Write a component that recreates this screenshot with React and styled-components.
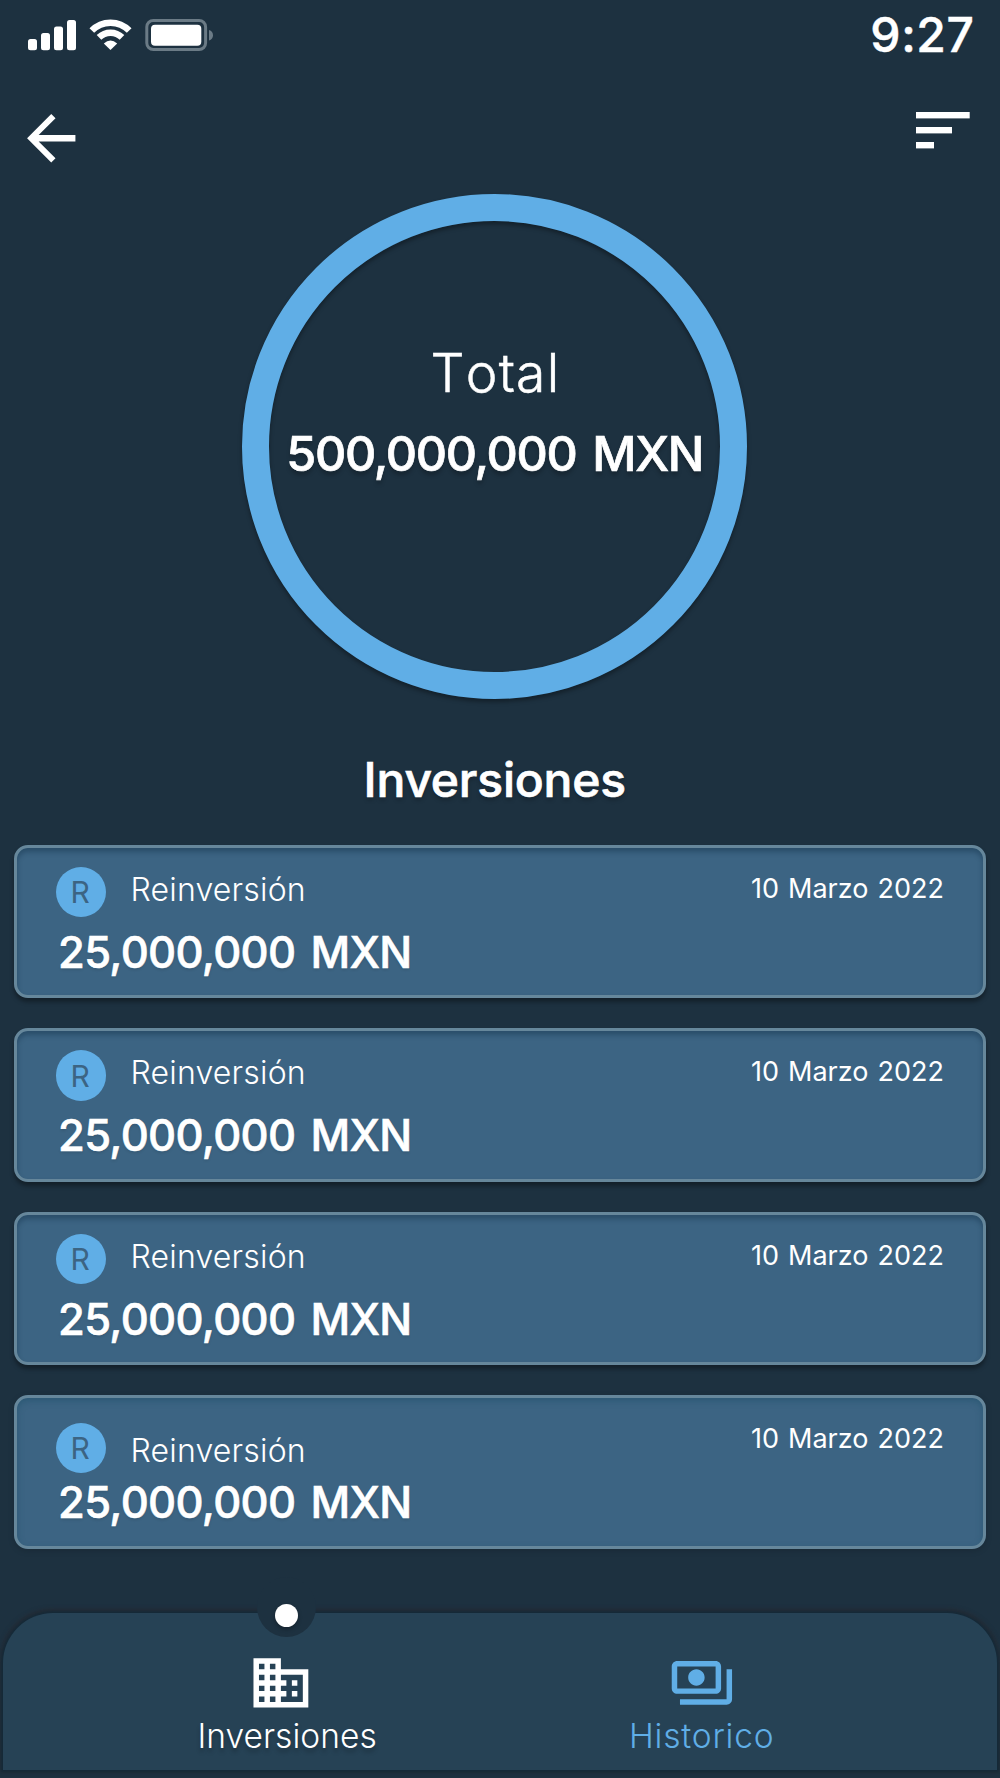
// ========================================
// INVESTMENTS SCREEN
// ========================================
// Total ring, list of investments and bottom navigation

import styled, { createGlobalStyle, css } from 'styled-components';

const GlobalStyle = createGlobalStyle`
  :root {
    --bg: #1d3140;
    --blue: #60aee6;
    --card: #3c6483;
    --card-border: #66879b;
    --nav: #264255;
  }

  * {
    box-sizing: border-box;
  }

  body {
    margin: 0;
    background: var(--bg);
    color: white;
    font-family: 'Inter', sans-serif;
  }
`;

// ========================================
// STYLED COMPONENTS
// ========================================

const Screen = styled.div`
  display: flex;
  flex-direction: column;
  width: 1000px;
  height: 1778px;
  overflow: hidden;
  background: var(--bg);
  white-space: nowrap;

  svg {
    display: block;
    flex: none;
  }
`;

// Status bar
const StatusBar = styled.div`
  display: flex;
  align-items: center;
  justify-content: space-between;
  height: 69px;
  padding: 0 25.5px 0 28px;
`;

const StatusIcons = styled.div`
  display: flex;
  align-items: center;
  gap: 13px;
  padding-top: 1px;
`;

const Clock = styled.span`
  font-size: 48px;
  font-weight: 500;
  line-height: 58px;
  letter-spacing: 0.6px;
  -webkit-text-stroke: 0.5px currentColor;
`;

// Row with the back and filter buttons
const TopBar = styled.div`
  display: flex;
  align-items: flex-start;
  justify-content: space-between;
  height: 125px;
  padding: 32.5px 30px 0 15px;
`;

const IconButton = styled.button`
  padding: ${props => props.$offset || 0}px 0 0;
  border: none;
  background: none;
  color: white;
`;

// Total ring
const Summary = styled.section`
  display: flex;
  flex-direction: column;
  align-items: center;
  padding-right: 10.5px;
`;

const Ring = styled.div`
  display: flex;
  flex-direction: column;
  align-items: center;
  width: 505px;
  height: 505px;
  padding-top: 122px;
  border: 27px solid var(--blue);
  border-radius: 50%;
  box-shadow: 0 3px 4px rgba(0, 0, 0, 0.35), inset 0 3px 4px rgba(0, 0, 0, 0.35);
`;

const RingLabel = styled.span`
  padding-left: 1.5px;
  font-size: 53.5px;
  font-weight: 300;
  line-height: 60px;
  letter-spacing: 1.3px;
  font-kerning: none;
  -webkit-text-stroke: 0.5px currentColor;
`;

const RingAmount = styled.span`
  margin-top: 21px;
  font-size: 48.5px;
  font-weight: 500;
  line-height: 60px;
  letter-spacing: -1.3px;
  word-spacing: 4px;
  text-shadow: 0 4px 4px rgba(0, 0, 0, 0.25);
  -webkit-text-stroke: 0.7px currentColor;
`;

const Heading = styled.h1`
  margin: 51px 0 0;
  font-size: 48px;
  font-weight: 500;
  line-height: 60px;
  letter-spacing: -0.2px;
  text-shadow: 0 3px 4px rgba(0, 0, 0, 0.25);
  -webkit-text-stroke: 0.7px currentColor;
`;

// Investment list
const List = styled.div`
  display: flex;
  flex-direction: column;
  gap: 30px;
  padding: 34.6px 14px 64.5px;
`;

const Card = styled.article`
  height: 153.5px;
  padding: 0 39px 0 38.5px;
  border: 3px solid var(--card-border);
  border-radius: 14px;
  background: var(--card);

  ${props => props.$raised ? css`
    box-shadow: 0 4px 4px rgba(0, 0, 0, 0.35), inset 0 4px 5px rgba(20, 50, 75, 0.45);
  ` : css`
    box-shadow: 0 2px 6px rgba(0, 0, 0, 0.15), inset 0 3px 6px rgba(30, 80, 105, 0.5);
  `}
`;

const CardTop = styled.div`
  display: flex;
  align-items: flex-start;
  height: 79px;
`;

const Badge = styled.span`
  display: flex;
  align-items: center;
  justify-content: center;
  width: 50.5px;
  height: 50.5px;
  margin-top: ${props => (props.$low ? 24.8 : 19.2)}px;
  padding-right: 1px;
  border-radius: 50%;
  background: var(--blue);
  color: var(--card);
  font-size: 30px;
  line-height: 50px;
`;

const CardLabel = styled.span`
  margin: ${props => (props.$low ? 33.2 : 22)}px 0 0 24.5px;
  font-size: 32px;
  font-weight: 300;
  line-height: 40px;
  letter-spacing: 0.2px;
`;

const CardDate = styled.time`
  margin: 26.3px 0 0 auto;
  font-size: 27px;
  line-height: 30px;
  word-spacing: 1.5px;
`;

const CardAmount = styled.div`
  margin-left: 2.5px;
  font-size: 43.5px;
  font-weight: 500;
  line-height: 50px;
  letter-spacing: -0.65px;
  word-spacing: 4px;
  text-shadow: 0 2px 3px rgba(0, 0, 0, 0.1);
  -webkit-text-stroke: 0.6px currentColor;
`;

// Bottom navigation
const Nav = styled.nav`
  position: relative;
  display: flex;
  height: 157.3px;
  margin: 0 3px;
  padding: 37px 0 0 76.8px;
  border-radius: 50px 50px 0 0;
  background: var(--nav);
  box-shadow: 0 0 2px 2px #162a38, 0 -1px 4px 3px rgba(42, 36, 40, 0.5);
`;

// Notch cut in the bar above the active tab
const Notch = styled.span`
  position: absolute;
  top: -36px;
  left: 253.5px;
  width: 59px;
  height: 60px;
  border-radius: 50%;
  background: var(--bg);
`;

const ActiveDot = styled.span`
  position: absolute;
  top: -9.2px;
  left: 271.5px;
  width: 23px;
  height: 23px;
  border-radius: 50%;
  background: white;
  box-shadow: 0 2px 4px rgba(0, 0, 0, 0.3);
`;

const NavItem = styled.a`
  display: flex;
  flex-direction: column;
  align-items: center;
  width: 414.6px;
  color: ${props => (props.$active ? 'white' : 'var(--blue)')};
  font-size: 33.5px;
  font-weight: 300;
  line-height: 41px;
  letter-spacing: ${props => (props.$active ? 0.05 : 0.8)}px;
  text-shadow: ${props => (props.$active ? '0 4px 4px rgba(0, 0, 0, 0.25)' : 'none')};

  svg {
    margin-right: ${props => (props.$active ? 12 : 0)}px;
  }
`;

// ========================================
// ICONS
// ========================================

const SignalIcon = () => (
  <svg width="48" height="32" viewBox="0 0 48 32" fill="white">
    <rect x="0" y="20" width="9" height="11.2" rx="2.5" />
    <rect x="13" y="14" width="9" height="17.2" rx="2.5" />
    <rect x="26" y="7.6" width="9" height="23.6" rx="2.5" />
    <rect x="39" y="1" width="9" height="30.2" rx="2.5" />
  </svg>
);

const WifiIcon = () => (
  <svg width="43" height="32" viewBox="89 19 43 32" fill="none" stroke="white" strokeWidth="6.5">
    <path d="M91.8 30.6A26 26 0 0 1 129.2 30.6" />
    <path d="M99 37.4A16.3 16.3 0 0 1 122 37.4" />
    <path d="M110.5 50L103.8 43.4Q110.5 37.8 117.2 43.4Z" fill="white" stroke="none" />
  </svg>
);

const BatteryIcon = () => (
  <svg width="68" height="32" viewBox="145 19 68 32">
    <rect x="146.8" y="20.5" width="58.8" height="29" rx="6.5" fill="none" stroke="#6b7b86" strokeWidth="3" />
    <rect x="151" y="24.7" width="50.3" height="21" rx="4" fill="white" />
    <path d="M209 30C214.3 31.5 214.3 38.7 209 40.4Z" fill="#6b7b86" />
  </svg>
);

const BackIcon = () => (
  <svg width="72.5" height="72.5" viewBox="0 0 24 24" fill="currentColor">
    <path d="M20 10.9H7.83l5.59-5.5L12 4l-8 8 8 8 1.41-1.41-5.58-5.49H20z" />
  </svg>
);

const FilterIcon = () => (
  <svg width="54" height="37" viewBox="0 0 54 37" fill="currentColor">
    <rect width="53.7" height="6.4" />
    <rect y="15" width="36" height="6.4" />
    <rect y="30" width="18" height="6.4" />
  </svg>
);

const BusinessIcon = () => (
  <svg width="65.8" height="65.8" viewBox="0 0 24 24" fill="currentColor">
    <path d="M12 7V3H2v18h20V7H12zM6 19H4v-2h2v2zm0-4H4v-2h2v2zm0-4H4V9h2v2zm0-4H4V5h2v2zm4 12H8v-2h2v2zm0-4H8v-2h2v2zm0-4H8V9h2v2zm0-4H8V5h2v2zm10 12h-8v-2h2v-2h-2v-2h2v-2h-2V9h8v10zm-2-8h-2v2h2v-2zm0 4h-2v2h2v-2z" />
  </svg>
);

const PaymentsIcon = () => (
  <svg width="65.8" height="65.8" viewBox="0 0 24 24" fill="currentColor">
    <path d="M19 14V6c0-1.1-.9-2-2-2H3c-1.1 0-2 .9-2 2v8c0 1.1.9 2 2 2h14c1.1 0 2-.9 2-2zm-2 0H3V6h14v8zm-7-7c-1.66 0-3 1.34-3 3s1.34 3 3 3 3-1.34 3-3-1.34-3-3-3zm13 0v11c0 1.1-.9 2-2 2H4v-2h17V7h2z" />
  </svg>
);

// ========================================
// SCREEN
// ========================================

const investments = [
  { id: 1, type: 'Reinversión', amount: '25,000,000 MXN', date: '10 Marzo 2022' },
  { id: 2, type: 'Reinversión', amount: '25,000,000 MXN', date: '10 Marzo 2022' },
  { id: 3, type: 'Reinversión', amount: '25,000,000 MXN', date: '10 Marzo 2022' },
  { id: 4, type: 'Reinversión', amount: '25,000,000 MXN', date: '10 Marzo 2022', last: true },
];

const InvestmentCard = ({ type, amount, date, last = false }) => (
  <Card $raised={!last}>
    <CardTop>
      <Badge $low={last}>{type[0]}</Badge>
      <CardLabel $low={last}>{type}</CardLabel>
      <CardDate>{date}</CardDate>
    </CardTop>
    <CardAmount>{amount}</CardAmount>
  </Card>
);

const App = () => {
  return (
    <>
      <GlobalStyle />
      <Screen>
        <StatusBar>
          <StatusIcons>
            <SignalIcon />
            <WifiIcon />
            <BatteryIcon />
          </StatusIcons>
          <Clock>9:27</Clock>
        </StatusBar>

        <TopBar>
          <IconButton aria-label="Regresar"><BackIcon /></IconButton>
          <IconButton aria-label="Filtrar" $offset={10.5}><FilterIcon /></IconButton>
        </TopBar>

        <Summary>
          <Ring>
            <RingLabel>Total</RingLabel>
            <RingAmount>500,000,000 MXN</RingAmount>
          </Ring>
          <Heading>Inversiones</Heading>
        </Summary>

        <List>
          {investments.map(item => (
            <InvestmentCard key={item.id} {...item} />
          ))}
        </List>

        <Nav>
          <Notch />
          <ActiveDot />
          <NavItem $active>
            <BusinessIcon />
            Inversiones
          </NavItem>
          <NavItem>
            <PaymentsIcon />
            Historico
          </NavItem>
        </Nav>
      </Screen>
    </>
  );
};

export default App;
